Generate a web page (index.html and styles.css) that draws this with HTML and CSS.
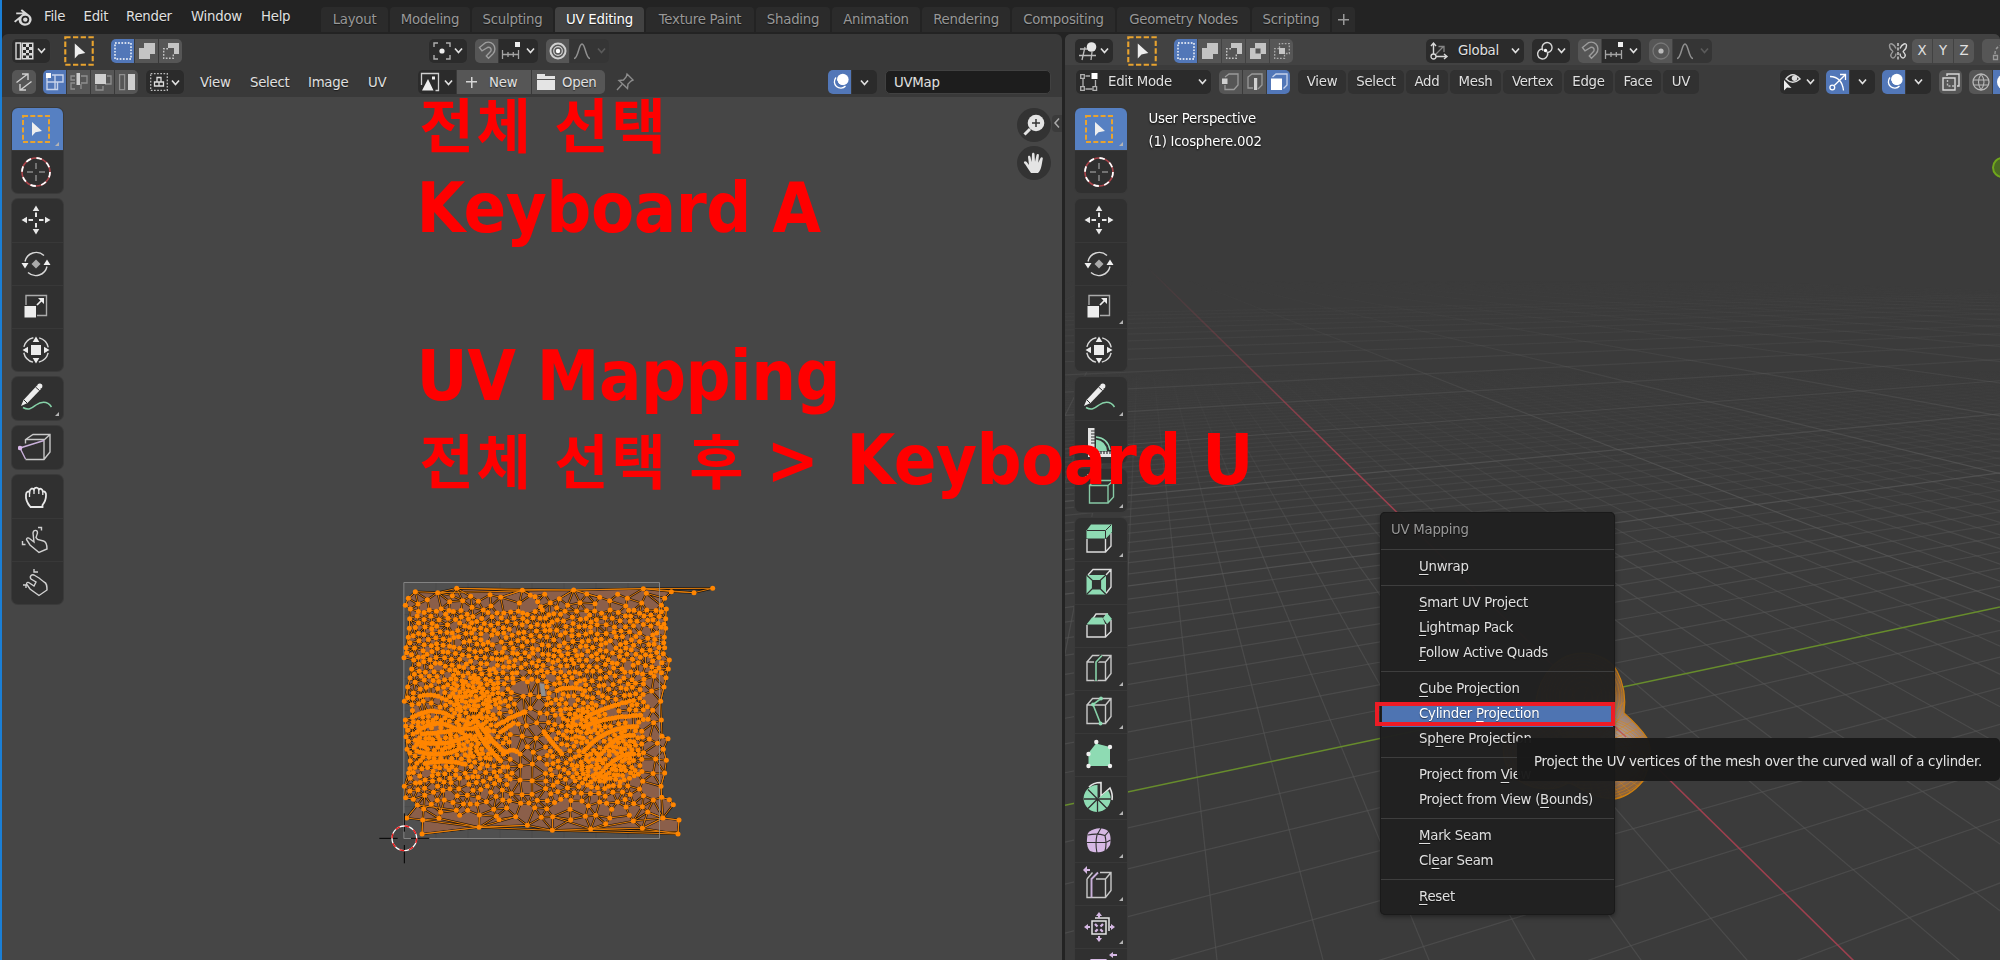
FILE: index.html
```html
<!DOCTYPE html>
<html lang="en">
<head>
<meta charset="utf-8">
<title>Blender</title>
<link rel="stylesheet" href="styles.css">
</head>
<body>
<svg class="defs" aria-hidden="true">
  <!-- header icons, 20x20 -->
  <symbol id="chev" viewBox="0 0 10 10"><path d="M1.8 3.2 5 6.8 8.2 3.2" fill="none" stroke="currentColor" stroke-width="1.5"/></symbol>
  <symbol id="logo" viewBox="0 0 22 20"><path d="M2 14.2 10.5 7.2H4.2V5.4h6.6L8.6 3.6 10 2.2l8 6.2a6.6 6.2 0 1 1-11.6 4.4L3.4 15.6z" fill="#d8d8d8"/><circle cx="13.3" cy="12.6" r="3.9" fill="#232323"/><circle cx="13.3" cy="12.6" r="2.2" fill="#d8d8d8"/></symbol>
  <symbol id="uved" viewBox="0 0 20 20"><path d="M1 2h4.500v16H1z" fill="none" stroke="#d8d8d8" stroke-width="1.400"/><path d="M6.500 1.500h12v17h-12z" fill="#d8d8d8"/><path d="M8 3h3v3H8zm6 0h3v3h-3zM11 6h3v3h-3zM8 9h3v3H8zm6 0h3v3h-3zM11 12h3v2.500h-3zM8 14.500h3V17H8zm6 0h3V17h-3z" fill="#2b2b2b"/></symbol>
  <symbol id="arrow" viewBox="-18 -18 36 36"><rect x="-13" y="-13" width="26" height="26" fill="none" stroke="#e8a32f" stroke-width="2" stroke-dasharray="5 2.300"/><path d="M-4-7V7L-.5 3.200 6 2z" fill="#eee"/></symbol>
  <symbol id="selnew" viewBox="0 0 20 20"><rect x="2" y="2" width="16" height="16" fill="none" stroke="#fff" stroke-width="1.400" stroke-dasharray="1.700 1.500"/></symbol>
  <symbol id="selext" viewBox="0 0 20 20"><path d="M7 2h11v11h-5v5H2V7h5z" fill="#c4c4c4"/></symbol>
  <symbol id="selsub" viewBox="0 0 20 20"><path d="M7 2h11v11h-5V7H7z" fill="#c4c4c4"/><path d="M7 7.700H2.700V17.300H12.300V13" fill="none" stroke="#c4c4c4" stroke-width="1.400" stroke-dasharray="1.700 1.500"/></symbol>
  <symbol id="seldif" viewBox="0 0 20 20"><path d="M7 2h11v11h-5v5H2V7h5zM7.500 7.500v5h5v-5z" fill="#c4c4c4" fill-rule="evenodd"/></symbol>
  <symbol id="selint" viewBox="0 0 20 20"><path d="M7 7h6v6H7z" fill="#c4c4c4"/><path d="M7.500 7V2.700H17.300V12.500H13M7 7.700H2.700V17.300H12.500V13" fill="none" stroke="#aaa" stroke-width="1.300" stroke-dasharray="1.700 1.500"/></symbol>
  <symbol id="pivot" viewBox="0 0 20 20"><path d="M2 6V2h4M14 2h4v4M18 14v4h-4M6 18H2v-4" fill="none" stroke="#b0b0b0" stroke-width="1.400"/><circle cx="10" cy="10" r="2.600" fill="#eee"/></symbol>
  <symbol id="magnet" viewBox="0 0 20 20"><path d="M2.500 6.500 6.500 3.200a5.800 6 0 0 1 9.500 9.600l-4.500 4.400-2.200-2.300 4-4.100a2.600 2.600 0 0 0-3.600-3.800L5 9.800z" fill="none" stroke="#9c9c9c" stroke-width="1.400"/></symbol>
  <symbol id="snap" viewBox="0 0 20 20"><path d="M1.500 9v9M7 11v5M12.300 11v5M17.500 9v9M1.500 13.500h16" fill="none" stroke="#a4a4a4" stroke-width="1.300"/><path d="M14 1h5v5h-5z" fill="#eee"/></symbol>
  <symbol id="prop" viewBox="0 0 20 20"><circle cx="10" cy="10" r="7.500" fill="none" stroke="#cfcfcf" stroke-width="2"/><circle cx="10" cy="10" r="4.300" fill="none" stroke="#cfcfcf" stroke-width="1.200"/><circle cx="10" cy="10" r="2.200" fill="#fff"/></symbol>
  <symbol id="propoff" viewBox="0 0 20 20"><circle cx="10" cy="10" r="8" fill="none" stroke="#777" stroke-width="1.300"/><circle cx="10" cy="10" r="2.600" fill="#bbb"/></symbol>
  <symbol id="curve" viewBox="0 0 20 20"><path d="M2 17.500C6.500 17.500 6.500 3 10 3s3.500 14.500 8 14.500" fill="none" stroke="#909090" stroke-width="1.500"/></symbol>
  <symbol id="sync" viewBox="0 0 20 20"><path d="M2.500 10.500 13 2.500M8 2h6v6M17.500 9.500 7 17.500M12 18H6v-6" fill="none" stroke="#d0d0d0" stroke-width="1.400"/></symbol>
  <symbol id="uvv" viewBox="0 0 20 20"><path d="M2 4v13.500h10.500V10H18V3H7M2 10h10.500M10 3v14.500" fill="none" stroke="#c6d2ea" stroke-width="1.400"/><path d="M1 1h5v5H1z" fill="#fff"/></symbol>
  <symbol id="uve" viewBox="0 0 20 20"><path d="M6 4H2v4h4M6 11H2v6h4M12 4h6v7h-6M12 17V12" fill="none" stroke="#8f8f8f" stroke-width="1.300"/><path d="M7.500 1h3.500v12H7.500z" fill="#cfcfcf"/></symbol>
  <symbol id="uvf" viewBox="0 0 20 20"><path d="M14 4h4v8h-6M3 13v5h7v-4" fill="none" stroke="#8f8f8f" stroke-width="1.300"/><path d="M2 2h11v10H2z" fill="#cfcfcf"/></symbol>
  <symbol id="uvi" viewBox="0 0 20 20"><path d="M2.600 2.600h5v15h-5z" fill="none" stroke="#8f8f8f" stroke-width="1.300"/><path d="M11 2h7v16h-7z" fill="#cfcfcf"/></symbol>
  <symbol id="sticky" viewBox="0 0 20 20"><rect x="1.700" y="1.700" width="16.600" height="16.600" fill="none" stroke="#bbb" stroke-width="1.300" stroke-dasharray="1.700 1.500"/><path d="M8 5.500h4V10H8zM5.500 10H10v4H5.500zM10 10h4.500v4H10z" fill="none" stroke="#ddd" stroke-width="1.300"/></symbol>
  <symbol id="img" viewBox="0 0 20 20"><path d="M1.500 13V1.500h17v17h-3" fill="none" stroke="#cfcfcf" stroke-width="1.300"/><path d="M2 18.500 8 7l5.500 11.500zM12 4.500h3v3h-3z" fill="#eee"/></symbol>
  <symbol id="folder" viewBox="0 0 20 20"><path d="M1 2h8v2h10v3H1zM1 8h18v10H1z" fill="#e4e4e4"/></symbol>
  <symbol id="pin" viewBox="0 0 20 20"><path d="M12 2 18 8l-2 1-3 3-.5 4.500L4 8.500 8.500 8 11.300 4.700zM7 12.500 2 18" fill="none" stroke="#8c8c8c" stroke-width="1.400"/></symbol>
  <symbol id="over" viewBox="0 0 20 20"><circle cx="12.800" cy="7.500" r="5.800" fill="#fff"/><path d="M6 5.500a6.300 6.300 0 1 0 9.500 8.500" fill="none" stroke="#fff" stroke-width="1.300"/><path d="M7 9a6 6 0 0 0 6 5" fill="none" stroke="#5277b8" stroke-width="1.300"/></symbol>
  <symbol id="ved" viewBox="0 0 20 20"><path d="M2 8h8M1 14.500h17M7 6 4 19M14 11l-1 8" fill="none" stroke="#bbb" stroke-width="1.300"/><circle cx="13.500" cy="6" r="4.800" fill="#e6e6e6"/></symbol>
  <symbol id="edit" viewBox="0 0 20 20"><path d="M4 6.500v8M6.500 17h7M16.500 8v6M6.500 4H11" fill="none" stroke="#b0b0b0" stroke-width="1.300"/><path d="M1.700 2.700h3.600v3.600H1.700zM1.700 14.700h3.600v3.600H1.700zM14 14.700h3.600v3.600H14z" fill="none" stroke="#b0b0b0" stroke-width="1.300"/><path d="M12.500 1h6v6h-6z" fill="#fff"/></symbol>
  <symbol id="mv" viewBox="0 0 20 20"><path d="M4 5 8 2h9v11l-4 4.500H4V13" fill="none" stroke="#9a9a9a" stroke-width="1.300"/><path d="M1 6.500h5.500V12H1z" fill="#d0d0d0"/></symbol>
  <symbol id="me" viewBox="0 0 20 20"><path d="M8 16H3V5l4-3h10v11l-4 4" fill="none" stroke="#9a9a9a" stroke-width="1.300"/><path d="M9 6h3.200v12H9z" fill="#d0d0d0"/></symbol>
  <symbol id="mf" viewBox="0 0 20 20"><path d="M3.500 5 7 2h11v11l-3.500 3.500" fill="none" stroke="#c6d2ea" stroke-width="1.300"/><path d="M2 6.500h11V18H2z" fill="#fff"/></symbol>
  <symbol id="orient" viewBox="0 0 20 20"><path d="M4.500 2.500v13h13M2 5l2.500-3L7 5M15 13l3 2.500-3 2.500" fill="none" stroke="#d8d8d8" stroke-width="1.400"/><path d="M5 15 14 6M9.500 5.500H15V11" fill="none" stroke="#858585" stroke-width="1.300"/><circle cx="4.500" cy="15.500" r="2.500" fill="#2b2b2b" stroke="#d8d8d8" stroke-width="1.300"/></symbol>
  <symbol id="link" viewBox="0 0 20 20"><path d="M8 9.500a5 5 0 1 1 5 2M12 10.500a5 5 0 1 1-5-2.500" fill="none" stroke="#d8d8d8" stroke-width="1.400"/><circle cx="10.500" cy="9.500" r="1.700" fill="#fff"/></symbol>
  <symbol id="bfly" viewBox="0 0 20 20"><path d="M8 7.500C6 2.500 1.500 1.500 1.500 4.500S3 9 4.500 10s-3 2.500-1.500 5.500 5 1 5-3" fill="none" stroke="#9a9a9a" stroke-width="1.400"/><path d="M12 7.500c2-5 6.500-6 6.500-3S17 9 15.500 10s3 2.500 1.500 5.500-5 1-5-3" fill="none" stroke="#d8d8d8" stroke-width="1.400"/><path d="M10 2v17" stroke="#ddd" stroke-width="1.300" stroke-dasharray="3 1.500"/></symbol>
  <symbol id="eye" viewBox="0 0 20 20"><path d="M3 7q6.500-8.500 14 0-7.500 6.500-14 0z" fill="none" stroke="#ddd" stroke-width="1.500"/><circle cx="11.500" cy="6.200" r="2.700" fill="#ddd"/><path d="M1 8v10.500l3-3 4.500.5z" fill="#eee"/></symbol>
  <symbol id="giz" viewBox="0 0 20 20"><path d="M2 4.500Q14 5 15.500 18.500M6.300 13.500 17 3M12 2.500h5.500V8" fill="none" stroke="#fff" stroke-width="1.300"/><circle cx="4.300" cy="15.500" r="2.400" fill="none" stroke="#fff" stroke-width="1.300"/></symbol>
  <symbol id="xray" viewBox="0 0 20 20"><path d="M2 6h12v12H2zM6 4V2h12v12h-2" fill="none" stroke="#d8d8d8" stroke-width="1.400"/><path d="M6.500 8v6H13" fill="none" stroke="#bbb" stroke-width="1.400" stroke-dasharray="2 1.500"/></symbol>
  <symbol id="wire" viewBox="0 0 20 20"><circle cx="10" cy="10" r="8" fill="none" stroke="#b8b8b8" stroke-width="1.300"/><path d="M10 2q-5 8 0 16M10 2q6 8 0 16M2 8h16M3 13h14" fill="none" stroke="#b8b8b8" stroke-width="1.100"/></symbol>
  <symbol id="auto" viewBox="0 0 20 20"><path d="M3 13C3 7 7 4 12 4M8 17C13 17 16 14 17 9" fill="none" stroke="#999" stroke-width="1.400" stroke-dasharray="3 2"/><path d="M1.500 14.500h4v4h-4zM14 2h4v4h-4z" fill="none" stroke="#999" stroke-width="1.300"/></symbol>

  <!-- tool icons, 36x36 around the origin -->
  <symbol id="t-cursor" viewBox="-18 -18 36 36"><circle r="14" fill="none" stroke="#a9444a" stroke-width="1.600"/><circle r="14" fill="none" stroke="#fff" stroke-width="1.800" stroke-dasharray="5.500 5.500"/><path d="M-9 0h6M3 0h6M0-9v6M0 3v6" stroke="#888" stroke-width="1.500"/></symbol>
  <symbol id="t-move" viewBox="-18 -18 36 36"><path d="M0-14.500 3.300-9h-6.600zM0 14.500 3.300 9h-6.600zM-14.500 0-9-3.300v6.600zM14.500 0 9-3.300v6.600z" fill="#e8e8e8"/><path d="M-7.500 0h4.500M3 0h4.500M0-7.500v4.500M0 3v4.500" stroke="#e8e8e8" stroke-width="2" /></symbol>
  <symbol id="t-rot" viewBox="-18 -18 36 36"><path d="M-11-2.500A11.500 11.500 0 0 1 8-8.500M11 2.500A11.500 11.500 0 0 1-8 8.500" fill="none" stroke="#d8d8d8" stroke-width="1.400"/><path d="M-14.500-1h7L-11 4.500zM14.500 1h-7L11-4.500z" fill="#f0f0f0"/><path d="M0-4.500 4.500 0 0 4.500-4.500 0z" fill="#aaa"/></symbol>
  <symbol id="t-scale" viewBox="-18 -18 36 36"><path d="M-10-2v-9.500h20.500V8.500H1" fill="none" stroke="#aaa" stroke-width="1.400"/><path d="M-11.500-1H0v11.500h-11.500zM8-9v6L2-9z" fill="#ededed"/><path d="M1-2 6-7" stroke="#ededed" stroke-width="1.700"/></symbol>
  <symbol id="t-tra" viewBox="-18 -18 36 36"><circle r="12.500" fill="none" stroke="#d8d8d8" stroke-width="1.400" stroke-dasharray="13.600 6" stroke-dashoffset="-3"/><path d="M-5-5H5V5H-5zM0-13.500 3.300-8h-6.600zM0 13.500 3.300 8h-6.600zM-13.500 0-8-3.300v6.600zM13.500 0 8-3.300v6.600z" fill="#ededed"/></symbol>
  <symbol id="t-pen" viewBox="-18 -18 36 36"><path d="M-15 8l2.500-6L1-12.500 5-9-8.500 5z" fill="#ededed"/><circle cx="3.800" cy="-12" r="2.600" fill="#ededed"/><path d="M-.5-11 3.500-7.500M-12 2l3 3" stroke="#303030" stroke-width="1"/><path d="M-13 9.500C-7 13-4 10 0 7S11 2 15.500 9" fill="none" stroke="#86d2a8" stroke-width="1.500"/></symbol>
  <symbol id="t-rip" viewBox="-18 -18 36 36"><path d="M-10.500-4.500v-4L-3-13.500H14L14 4 8 11.500H-10.500M8 11.500V-8L14-13.500M-10.500-8.500H8" fill="none" stroke="#c8c8c8" stroke-width="1.400"/><path d="M8-7.500-16 0l5.500 11" fill="none" stroke="#c9b0da" stroke-width="1.400"/><circle cx="-16" cy="0" r="2.300" fill="#d8b8e8"/></symbol>
  <symbol id="t-grab" viewBox="-18 -18 36 36"><path d="M-5.500 10C-9 6-10.500 2-10 -2.500c.2-3 2.500-3.500 3.500-2.500C-6-9-3-9-2-7.500-1-10 2-10 2.800-7.500 4.500-9 6.500-8 6.800-5.500 9-6 10.300-4 10-1.500 10 3 9 5 6.500 8v2z" fill="none" stroke="#e8e8e8" stroke-width="1.800"/><path d="M-6.500-4.500V0M-2-7v4M2.800-7v4M6.800-5v3" stroke="#e8e8e8" stroke-width="1.300"/></symbol>
  <symbol id="t-relax" viewBox="-18 -18 36 36"><path d="M3 12.500-6 5-9.500-.5c0-2 2-2 3-1L-2 2-3-7c.5-3.500 4.500-3.500 4.500 0L0-2.500l1.500 2 6 1.500c3 1 3.500 4 3.500 8zM2-12.500h3.500v3M-13.500 1v3.500h3" fill="none" stroke="#d0d0d0" stroke-width="1.400"/></symbol>
  <symbol id="t-pinch" viewBox="-18 -18 36 36"><path d="M3 12.500-6 6-9.500 1c0-2 2-2 3-1L-2 3l2-4-5-3c-2-3 1-5 3-4l5 3 5 4c3 1 3 4 3 8zM-2-14v3h4M-13 2h3v3" fill="none" stroke="#d0d0d0" stroke-width="1.400"/></symbol>
  <symbol id="t-meas" viewBox="-18 -18 36 36"><path d="M-11-14h6.500V9.500H14V15h-25z" fill="#e4e4e4"/><path d="M-8-11h4M-8-8h4M-8-5h4M-8-2h4M-8 1h4M-1 12V9M2 12V9M5 12V9M8 12V9M11 12V9" stroke="#303030" stroke-width="1.200"/><path d="M-3-2.500Q7-1 8 9H-3z" fill="#8edbb3"/><path d="M-3-5Q9-4 11 8" fill="none" stroke="#8edbb3" stroke-width="1.300"/></symbol>
  <symbol id="t-add" viewBox="-18 -18 36 36"><path d="M-9.500-5.500H9V12H-9.500zM-9.500-5.500-5-10.500H14.500V6L9 12M9-5.500l5.500-5" fill="none" stroke="#86c9a5" stroke-width="1.400"/><path d="M-11-17v6M-14-14h6" stroke="#86c9a5" stroke-width="1.500"/></symbol>
  <symbol id="t-ext" viewBox="-18 -18 36 36"><path d="M-12-1V12H6.500V-1M6.500 12 12 6V-7" fill="none" stroke="#dcdcdc" stroke-width="1.400"/><path d="M-12.500-9.500-8-15.500H13V-8L7-1.500h-19.500z" fill="#8edbb3"/><path d="M-12-9.500H6.500L12-15M6.500-9v7.500" fill="none" stroke="#303030" stroke-width="1"/></symbol>
  <symbol id="t-inset" viewBox="-18 -18 36 36"><path d="M-11-8-6-13.500H12V4L7 10.500M7-8l5-5.500" fill="none" stroke="#dcdcdc" stroke-width="1.400"/><path d="M-12.500-8H7V11.500h-19.500z" fill="#8edbb3"/><path d="M-6.500-2.500H1.500V6h-8zM-12.500-8l6 5.500M7-8-.5-1M-12.500 11.500l6-6M7 11.500 1 5.500" fill="#303030" stroke="#303030" stroke-width="1.200"/></symbol>
  <symbol id="t-bev" viewBox="-18 -18 36 36"><path d="M-12-1V11H6.500V-2M6.500 11 12 5.500V-6M-6-7.500-3-12H8L5-7" fill="none" stroke="#dcdcdc" stroke-width="1.400"/><path d="M-12.500-1.500-7-8.500H3.500L6.500-1.500zM4-8 8-13 13-7 8-2z" fill="#8edbb3"/></symbol>
  <symbol id="t-loop" viewBox="-18 -18 36 36"><path d="M-12-7V11.500H6.500V-7zM-12-7l5.500-6.500H12V4.500L6.500 11.500M6.500-7l5.500-6.500" fill="none" stroke="#c8c8c8" stroke-width="1.400"/><path d="M-3 11.500V-7L3-13.500" fill="none" stroke="#303030" stroke-width="4"/><path d="M-3 12V-7L3-13.500" fill="none" stroke="#86d2a8" stroke-width="1.600"/></symbol>
  <symbol id="t-knife" viewBox="-18 -18 36 36"><path d="M-12-7V11.500H6.500V-7zM-12-7l5.500-6.500H12V4.500L6.500 11.500M6.500-7l5.500-6.500" fill="none" stroke="#c8c8c8" stroke-width="1.400"/><path d="M2-13.500-6-7.500 1.500 11.500" fill="none" stroke="#86d2a8" stroke-width="1.600"/><circle cx="2" cy="-13.500" r="1.900" fill="#8edbb3"/><circle cx="-6" cy="-7.500" r="1.900" fill="#8edbb3"/><circle cx="1.500" cy="11.500" r="1.900" fill="#8edbb3"/></symbol>
  <symbol id="t-poly" viewBox="-18 -18 36 36"><path d="M-10.500 11V-2L-3-11.500 11-8V11z" fill="#8edbb3"/><g fill="#f0f0f0"><circle cx="-10.500" cy="11" r="2.200"/><circle cx="-10.500" cy="-1" r="2.200"/><circle cx="-2.700" cy="-13" r="2.200"/><circle cx="11" cy="-8" r="2.200"/><circle cx="11" cy="11" r="2.200"/></g></symbol>
  <symbol id="t-spin" viewBox="-18 -18 36 36"><path d="M-10-11Q-6-15.500 2-15.500V-2L11-10Q14-4 13 2" fill="none" stroke="#e4e4e4" stroke-width="1.600"/><path d="M-1.500 1V-13A13.500 13.500 0 1 0 9-7.500z" fill="#8edbb3"/><path d="M-1.500 1-11-8.500M-1.500 1H-15M-1.500 1-11 10.500M-1.500 1V14M-1.500 1 8 10.500M-1.500 1H12" stroke="#303030" stroke-width="1.300"/></symbol>
  <symbol id="t-smooth" viewBox="-18 -18 36 36"><path d="M-11-8C-5-14 4-14 9-10c3 3 3 9 2 14C7 12-3 12.500-9 10-13 6-12.500-2-11-8z" fill="#d6b8e4"/><path d="M-12 1.500H7L11.500-1M-2 12Q-4 2-2-6L2-13M-11-6Q-2-8 6-5.500L10-10M6-5.500Q8 3 6 10" fill="none" stroke="#303030" stroke-width="1.100"/></symbol>
  <symbol id="t-slide" viewBox="-18 -18 36 36"><path d="M-12-5V13.500H6.500V-5H-3M-12-5l5.500-6.500M1-11.500H12V6.500L6.500 13.500M6.500-5l5.500-6.500" fill="none" stroke="#c8c8c8" stroke-width="1.400"/><path d="M-7.500 13.500V-5L-1-11.500" fill="none" stroke="#c9b0da" stroke-width="1.900"/><path d="M-16-14l4-4v3h3v2h-3v3z" fill="#d6b8e4"/></symbol>
  <symbol id="t-shrink" viewBox="-18 -18 36 36"><path d="M-7-6H7V7H-7zM-4-9H10V4" fill="none" stroke="#e4e4e4" stroke-width="1.500"/><path d="M-4-3l8 8M4-3l-8 8" stroke="#d6b8e4" stroke-width="2.300" stroke-dasharray="3.500 4"/><path d="M0-15 3-11h-6zM0 15 3 11h-6zM-15 0-11-3v6zM16 0 12-3v6z" fill="#d6b8e4"/><path d="M0-11v2M0 9v2M-11 0h2M11 0h2" stroke="#d6b8e4" stroke-width="2"/></symbol>
  <symbol id="t-shear" viewBox="-18 -18 36 36"><path d="M-14-6l6-5H8L4-6z" fill="#d6b8e4"/><path d="M10-15l4-3v2h4v2h-4v2z" fill="#d6b8e4"/></symbol>
</svg>

<div class="app">
  <header class="topbar">
    <svg class="logo"><use href="#logo"/></svg>
    <nav class="menus"><span class="m-file">File</span><span class="m-edit">Edit</span><span class="m-render">Render</span><span class="m-window">Window</span><span class="m-help">Help</span></nav>
    <nav class="tabs">
      <span class="tab w67">Layout</span><span class="tab w80">Modeling</span><span class="tab w81">Sculpting</span><span class="tab w89 active">UV Editing</span><span class="tab w108">Texture Paint</span><span class="tab w74">Shading</span><span class="tab w88">Animation</span><span class="tab w88">Rendering</span><span class="tab w103">Compositing</span><span class="tab w133">Geometry Nodes</span><span class="tab w78">Scripting</span><span class="tab w23 plus"><i></i></span>
    </nav>
  </header>

  <main class="areas">
    <section class="area uv">
      <div class="hrow r1">
        <div class="btn dark w38"><svg><use href="#uved"/></svg><svg class="c"><use href="#chev"/></svg></div>
        <svg class="tool"><use href="#arrow"/></svg>
        <div class="grp ml18"><b class="on"><svg><use href="#selnew"/></svg></b><b><svg><use href="#selext"/></svg></b><b><svg><use href="#selsub"/></svg></b></div>
        <div class="btn dark w38 ml-piv"><svg><use href="#pivot"/></svg><svg class="c"><use href="#chev"/></svg></div>
        <div class="grp ml8"><b><svg><use href="#magnet"/></svg></b><b class="dk w40"><svg><use href="#snap"/></svg><svg class="c"><use href="#chev"/></svg></b></div>
        <div class="grp ml8"><b><svg><use href="#prop"/></svg></b><b class="dim w40"><svg><use href="#curve"/></svg><svg class="c"><use href="#chev"/></svg></b></div>
      </div>
      <div class="hrow r2">
        <div class="grp"><b class="w24"><svg><use href="#sync"/></svg></b></div>
        <div class="grp ml7"><b class="on"><svg><use href="#uvv"/></svg></b><b><svg><use href="#uve"/></svg></b><b><svg><use href="#uvf"/></svg></b><b><svg><use href="#uvi"/></svg></b></div>
        <div class="btn dark w38 ml8"><svg><use href="#sticky"/></svg><svg class="c"><use href="#chev"/></svg></div>
        <div class="hmenus"><span class="h50">View</span><span class="h58">Select</span><span class="h60">Image</span><span class="h49">UV</span></div>
        <div class="grp"><b class="dk w39"><svg><use href="#img"/></svg><svg class="c"><use href="#chev"/></svg></b><b class="w74 lab"><i class="plusi"></i>New</b><b class="w73 lab"><svg><use href="#folder"/></svg>Open</b></div>
        <svg class="pin"><use href="#pin"/></svg>
        <div class="grp ml-ov"><b class="on w23"><svg><use href="#over"/></svg></b><b class="dk w25"><svg class="c"><use href="#chev"/></svg></b></div>
        <div class="field">UVMap</div>
      </div>
      <div class="editor">
        <canvas id="uvmesh" width="1060" height="863"></canvas>
        <div class="toolbar">
          <div class="tg"><div class="tc on more"><svg><use href="#arrow"/></svg></div><div class="tc"><svg><use href="#t-cursor"/></svg></div></div>
          <div class="tg"><div class="tc"><svg><use href="#t-move"/></svg></div><div class="tc"><svg><use href="#t-rot"/></svg></div><div class="tc"><svg><use href="#t-scale"/></svg></div><div class="tc"><svg><use href="#t-tra"/></svg></div></div>
          <div class="tg"><div class="tc more"><svg><use href="#t-pen"/></svg></div></div>
          <div class="tg"><div class="tc"><svg><use href="#t-rip"/></svg></div></div>
          <div class="tg"><div class="tc"><svg><use href="#t-grab"/></svg></div><div class="tc"><svg><use href="#t-relax"/></svg></div><div class="tc"><svg><use href="#t-pinch"/></svg></div></div>
        </div>
        <div class="nav">
          <div class="rb"><svg viewBox="-17 -17 34 34"><circle cx="2" cy="-2" r="8.300" fill="#e4e4e4"/><path d="M-4 4-9.500 9.500" stroke="#e4e4e4" stroke-width="3"/><path d="M2-6v8M-2-2h8" stroke="#333" stroke-width="1.500"/></svg></div>
          <div class="rb"><svg viewBox="-17 -17 34 34"><path d="M-3 10C-6 6-8 2-10 0c-.5-1.500 1-2.500 2.500-1.200L-5 2-6-6c0-1.700 2.200-1.700 2.500 0L-2.400-1-2-9c.2-1.600 2.300-1.600 2.500 0L1-1.200 2.500-8c.4-1.600 2.500-1.300 2.400.4L4.200-.3 6.500-5c.8-1.400 2.600-.6 2.300.8C7.500 2 7.500 7 4 10z" fill="#e4e4e4"/></svg></div>
        </div>
        <div class="side"><svg viewBox="0 0 9 16"><path d="M7 3.500 3 8l4 4.500" fill="none" stroke="#aaa" stroke-width="1.500"/></svg></div>
      </div>
    </section>

    <section class="area v3d">
      <canvas id="view" width="935" height="926"></canvas>
      <div class="hrow r1">
        <div class="btn dark w38"><svg><use href="#ved"/></svg><svg class="c"><use href="#chev"/></svg></div>
        <svg class="tool"><use href="#arrow"/></svg>
        <div class="grp ml18"><b class="on"><svg><use href="#selnew"/></svg></b><b><svg><use href="#selext"/></svg></b><b><svg><use href="#selsub"/></svg></b><b><svg><use href="#seldif"/></svg></b><b><svg><use href="#selint"/></svg></b></div>
        <div class="btn dark w98 ml-glob"><svg><use href="#orient"/></svg><em>Global</em><svg class="c"><use href="#chev"/></svg></div>
        <div class="btn dark w38 ml8"><svg><use href="#link"/></svg><svg class="c"><use href="#chev"/></svg></div>
        <div class="grp ml8"><b><svg><use href="#magnet"/></svg></b><b class="dk w40"><svg><use href="#snap"/></svg><svg class="c"><use href="#chev"/></svg></b></div>
        <div class="grp ml8"><b><svg><use href="#propoff"/></svg></b><b class="dim w40"><svg><use href="#curve"/></svg><svg class="c"><use href="#chev"/></svg></b></div>
        <svg class="bfly"><use href="#bfly"/></svg>
        <div class="grp xyz"><b>X</b><b>Y</b><b>Z</b></div>
        <div class="grp ml8"><b class="w40"><svg><use href="#auto"/></svg></b></div>
      </div>
      <div class="hrow r2">
        <div class="btn dark w135"><svg><use href="#edit"/></svg><em>Edit Mode</em><svg class="c"><use href="#chev"/></svg></div>
        <div class="grp ml8"><b><svg><use href="#mv"/></svg></b><b><svg><use href="#me"/></svg></b><b class="on"><svg><use href="#mf"/></svg></b></div>
        <div class="mbtns"><span class="w48">View</span><span class="w56">Select</span><span class="w42">Add</span><span class="w51">Mesh</span><span class="w59">Vertex</span><span class="w49">Edge</span><span class="w46">Face</span><span class="w36">UV</span></div>
        <div class="btn dark w39 ml-eye"><svg><use href="#eye"/></svg><svg class="c"><use href="#chev"/></svg></div>
        <div class="grp ml7"><b class="on"><svg><use href="#giz"/></svg></b><b class="dk w25"><svg class="c"><use href="#chev"/></svg></b></div>
        <div class="grp ml7"><b class="on"><svg><use href="#over"/></svg></b><b class="dk w25"><svg class="c"><use href="#chev"/></svg></b></div>
        <div class="grp ml8"><b><svg><use href="#xray"/></svg></b></div>
        <div class="grp ml7"><b><svg><use href="#wire"/></svg></b><b class="on"><svg viewBox="0 0 20 20"><circle cx="10" cy="10" r="8" fill="#fff"/></svg></b></div>
      </div>
      <div class="vbody">
        <div class="toolbar">
          <div class="tg"><div class="tc on more"><svg><use href="#arrow"/></svg></div><div class="tc"><svg><use href="#t-cursor"/></svg></div></div>
          <div class="tg"><div class="tc"><svg><use href="#t-move"/></svg></div><div class="tc"><svg><use href="#t-rot"/></svg></div><div class="tc more"><svg><use href="#t-scale"/></svg></div><div class="tc"><svg><use href="#t-tra"/></svg></div></div>
          <div class="tg"><div class="tc more"><svg><use href="#t-pen"/></svg></div><div class="tc"><svg><use href="#t-meas"/></svg></div></div>
          <div class="tg"><div class="tc more"><svg><use href="#t-add"/></svg></div></div>
          <div class="tg"><div class="tc more"><svg><use href="#t-ext"/></svg></div><div class="tc"><svg><use href="#t-inset"/></svg></div><div class="tc"><svg><use href="#t-bev"/></svg></div><div class="tc more"><svg><use href="#t-loop"/></svg></div><div class="tc more"><svg><use href="#t-knife"/></svg></div><div class="tc"><svg><use href="#t-poly"/></svg></div><div class="tc more"><svg><use href="#t-spin"/></svg></div><div class="tc more"><svg><use href="#t-smooth"/></svg></div><div class="tc more"><svg><use href="#t-slide"/></svg></div><div class="tc more"><svg><use href="#t-shrink"/></svg></div><div class="tc"><svg><use href="#t-shear"/></svg></div></div>
        </div>
        <div class="vinfo"><div>User Perspective</div><div>(1) Icosphere.002</div></div>
      </div>
      <div class="ygizmo"></div>
    </section>
  </main>
</div>

<div class="note">
  <p><span class="ko">전체 선택</span></p>
  <p>Keyboard A</p>
  <p></p>
  <p>UV Mapping</p>
  <p><span class="ko">전체 선택 후</span><span class="gt">&gt;</span><span class="kb">Keyboard U</span></p>
</div>

<div class="popup">
  <div class="ptitle">UV Mapping</div>
  <hr><div class="pi"><u>U</u>nwrap</div>
  <hr><div class="pi"><u>S</u>mart UV Project</div><div class="pi"><u>L</u>ightmap Pack</div><div class="pi"><u>F</u>ollow Active Quads</div>
  <hr><div class="pi"><u>C</u>ube Projection</div><div class="pi hot">Cylinder <u>P</u>rojection</div><div class="pi">Sp<u>h</u>ere Projection</div>
  <hr><div class="pi">Project from <u>V</u>iew</div><div class="pi">Project from View (<u>B</u>ounds)</div>
  <hr><div class="pi"><u>M</u>ark Seam</div><div class="pi">Cl<u>e</u>ar Seam</div>
  <hr><div class="pi"><u>R</u>eset</div>
</div>
<div class="redbox"></div>
<div class="tip">Project the UV vertices of the mesh over the curved wall of a cylinder.</div>
<script src="script.js"></script>
</body>
</html>
```

FILE: styles.css
```css
* { box-sizing: border-box; }
body { margin: 0; width: 2000px; height: 960px; overflow: hidden; background: #232323; position: relative;
  font-family: "DejaVu Sans", "Noto Sans CJK KR", sans-serif; font-size: 13.3px; letter-spacing: -.250px; color: #e0e0e0; }
.defs { position: absolute; width: 0; height: 0; }
.app { height: 960px; border-left: 2px solid #1a7fd6; display: flex; flex-direction: column; overflow: hidden; }
.topbar { height: 34px; flex: none; display: flex; text-shadow: 0 1px 1px #0008; }
.logo { width: 22px; height: 20px; margin: 7px 0 0 10px; }
.menus { display: flex; width: 287px; line-height: 33px; padding-left: 10px; }
.m-file { width: 39.500px; } .m-edit { width: 42.500px; } .m-render { width: 65px; } .m-window { width: 70px; }
.tabs { display: flex; gap: 2px; padding-top: 7px; height: 32px; }
.tab { background: #2b2b2b; border-radius: 4px 4px 0 0; color: #989898; text-align: center; line-height: 25px; white-space: nowrap; }
.tab.active { background: #424242; color: #fff; }
.w67 { width: 67px; } .w80 { width: 80px; } .w81 { width: 81px; } .w89 { width: 89px; } .w108 { width: 108px; }
.w74 { width: 74px; } .w88 { width: 88px; } .w103 { width: 103px; } .w133 { width: 133px; } .w78 { width: 78px; } .w23 { width: 23px; }
.plus { display: flex; align-items: center; justify-content: center; }
.plus i, .plusi { width: 11px; height: 11px; background: linear-gradient(#999, #999) center/11px 1.500px no-repeat, linear-gradient(#999, #999) center/1.500px 11px no-repeat; }

.areas { display: flex; gap: 3px; flex: 1; }
.area { border-radius: 6px 6px 0 0; overflow: hidden; position: relative; }
.uv { width: 1060px; background: #393939; flex: none; }
.v3d { width: 935px; background: #3b3b3b; flex: none; }
.v3d canvas { position: absolute; left: 0; top: 0; }
.hrow { display: flex; align-items: center; position: relative; padding-left: 10px; }
.uv .r1, .v3d .r1 { height: 31px; padding-top: 2px; }
.uv .r2 { height: 32px; padding-top: 2px; }
.v3d .r1 { background: #424242; }
.v3d .r2 { height: 32px; padding: 1px 0 0 11px; }
.hrow svg { width: 20px; height: 20px; flex: none; display: block; }
.hrow svg.c { width: 11px; height: 11px; color: #e0e0e0; }
.btn { height: 24px; border-radius: 5px; display: flex; align-items: center; justify-content: space-between; padding: 0 3px; flex: none; box-shadow: 0 0 0 1px #4442; }
.dark { background: #2b2b2b; }
.w38 { width: 38px; } .w39 { width: 39px; } .w40 { width: 40px; } .w24 { width: 24px; } .w25 { width: 25px; } .w98 { width: 98px; } .w135 { width: 135px; } .w73 { width: 73px; }
.btn em { font-style: normal; flex: 1; padding-left: 9px; text-shadow: 0 1px 1px #0008; }
.hrow svg.tool { width: 38px; height: 38px; margin: -8px 0 -8px 10px; }
.grp { display: flex; gap: 1px; border-radius: 5px; overflow: hidden; height: 24px; flex: none; }
.grp b { width: 23px; background: #565656; display: flex; align-items: center; justify-content: center; font-weight: 400; flex: none; }
.grp b.on { background: #5277b8; }
.grp b.dk, .grp b.dim { background: #2b2b2b; justify-content: space-around; }
.grp b.dim { background: #353535; }
.grp b.dim .c { color: #5a5a5a; }
.grp b.w23 { width: 23px; } .grp b.w24 { width: 24px; } .grp b.w25 { width: 25px; } .grp b.w39 { width: 38px; } .grp b.w40 { width: 39px; } .grp b.w74 { width: 74px; } .grp b.w73 { width: 73px; }
.grp b.lab { text-shadow: 0 1px 1px #0008; justify-content: flex-start; padding-left: 4px; gap: 6px; }
.grp b.lab .plusi { margin: 0 6px 0 5px; filter: brightness(1.400); }
.ml18 { margin-left: 13px; } .ml7 { margin-left: 7px; } .ml8 { margin-left: 8px; }
.ml-piv { margin-left: 247px; } .ml-ov { margin-left: 193px; } .ml-glob { margin-left: 133px; } .ml-eye { margin-left: 81px; }
.hmenus { display: flex; margin-left: 16px; text-shadow: 0 1px 1px #0008; }
.h50 { width: 50px; } .h58 { width: 58px; } .h60 { width: 60px; } .h49 { width: 50px; }
.hrow svg.pin { margin-left: 10px; }
.field { margin-left: 8px; width: 166px; height: 24px; border-radius: 5px; background: #1d1d1d; line-height: 23px; padding-left: 8px; border: 1px solid #414141; }
.bfly { margin-left: 176px; }
.xyz { margin-left: 4px; }
.xyz b { width: 20px; }
.mbtns { display: flex; gap: 2px; margin-left: 8px; }
.mbtns span { height: 24px; line-height: 23px; text-align: center; background: #313131; border-radius: 5px; text-shadow: 0 1px 1px #0008; }
.w48 { width: 48px; } .w56 { width: 56px; } .w42 { width: 42px; } .w51 { width: 51px; } .w59 { width: 59px; } .w49 { width: 49px; } .w46 { width: 46px; } .w36 { width: 36px; }

.editor { height: 863px; background: #464646; position: relative; }
.editor canvas { position: absolute; left: 0; top: 0; }
.toolbar { position: relative; display: flex; flex-direction: column; gap: 6.200px; padding: 10.500px 0 0 10px; width: 61px; }
.tg { background: #303030; border-radius: 6px; overflow: hidden; box-shadow: 0 0 0 1px #3a3a3a; flex: none; }
.tc { height: 43px; position: relative; display: flex; align-items: center; justify-content: center; padding-right: 3px; }
.tc + .tc { border-top: 1px solid #383838; }
.tc.on { background: #5680c2; height: 42px; }
.tc svg { width: 36px; height: 36px; }
.tc.more::after { content: ""; position: absolute; right: 4px; bottom: 4px; width: 0; height: 0; border: 2.500px solid transparent; border-right-color: #b4b4b4; border-bottom-color: #b4b4b4; }
.nav { position: absolute; left: 1015px; top: 11px; display: flex; flex-direction: column; gap: 4px; }
.rb { width: 34px; height: 34px; border-radius: 50%; background: #333; }
.rb svg { width: 34px; height: 34px; display: block; }
.side { position: absolute; right: 0; top: 18px; width: 10px; height: 17px; background: #3b3b3b; border-radius: 4px 0 0 4px; }
.side svg { width: 9px; height: 16px; display: block; }

.vbody { display: flex; position: relative; height: 863px; overflow: hidden; }
.v3d .toolbar { width: 61.500px; padding-top: 10.500px; }
.vinfo { color: #fff; padding: 10px 0 0 22px; line-height: 23px; text-shadow: 0 1px 2px #000; }
.ygizmo { position: absolute; left: 927px; top: 122.500px; width: 21px; height: 21px; border-radius: 50%; background: #4b6a24; border: 2px solid #70a61c; }

.note { position: absolute; left: 416.500px; top: 82px; color: #f00; font-family: "DejaVu Sans Condensed", "DejaVu Sans", sans-serif; font-stretch: condensed; font-weight: 700; font-size: 70px; letter-spacing: -.500px; }
.note p { margin: 0; height: 84px; line-height: 84px; white-space: pre; }
.ko { font-family: "Noto Sans CJK KR", sans-serif; font-size: 59px; line-height: 0; word-spacing: 4.500px; letter-spacing: 2.800px; margin-left: 3px; }
.gt { margin-left: 20px; }
.kb { margin-left: 28px; }

.popup { position: absolute; left: 1380px; top: 512px; width: 235px; height: 403px; border-radius: 5px; background: rgba(32, 32, 32, .970); box-shadow: inset 0 0 0 1px #1a1a1a, 0 2px 5px #0006; text-shadow: 0 1px 1px #0008; }
.ptitle { height: 32px; line-height: 36px; padding-left: 11px; color: #999; }
.popup hr { margin: 5px 1px; height: 1px; border: 0; background: #3e3e3e; }
.pi { height: 25px; line-height: 23px; padding-left: 39px; white-space: pre; }
.pi u { text-underline-offset: 3px; text-decoration-thickness: 1px; }
.pi.hot { background: #4e74b2; color: #fff; margin: 0 2px; padding-left: 37px; }
.redbox { position: absolute; left: 1375px; top: 702px; width: 240px; height: 24px; border: 4px solid #ee1c25; }
.tip { position: absolute; left: 1517px; top: 738px; width: 483px; height: 43px; border-radius: 5px; background: rgba(25, 25, 25, .970); line-height: 47px; padding-left: 17px; white-space: nowrap; color: #e2e2e2; }
```

FILE: script.js
```js
// Seeded generator so the mesh is the same on every load.
let seed = 20231;
function rnd() {
  seed = (seed * 1664525 + 1013904223) >>> 0;
  return seed / 4294967296;
}

function drawView() {
  const c = document.getElementById('view').getContext('2d');
  c.translate(-1065, -34);
  const O = [1583.3, 695.3], H = 262, VX = 1141.7, VY = 3627, A = 0.05222;
  function line(vx, px, py) {
    // extend from the vanishing point through (px, py)
    const dx = px - vx, dy = py - H, t = 4000 / Math.hypot(dx, dy);
    c.beginPath();
    c.moveTo(vx, H);
    c.lineTo(vx + dx * t * 2, H + dy * t * 2);
    c.stroke();
  }
  function grad(y0, y1, rgb, a) {
    const g = c.createLinearGradient(0, y0, 0, y1);
    g.addColorStop(0, `rgba(${rgb},0)`);
    g.addColorStop(1, `rgba(${rgb},${a})`);
    return g;
  }
  const minor = grad(370, 560, '84,84,84', 0.62);
  const major = grad(280, 480, '88,88,88', 0.75);
  c.lineWidth = 1.2;
  for (let pass = 0; pass < 2; pass++) {
    for (let n = -12; n < 160; n++) {
      if ((n % 10 === 0) !== (pass === 1) || n === 0) continue;
      if (!pass && n > 60) continue;
      c.strokeStyle = pass ? major : minor;
      const w = 1 + A * n;
      // point on the red axis at distance n, joined to the other vanishing point
      if (w > 0.05) {
        const px = (O[0] + A * n * VX) / w, py = (O[1] + A * n * H) / w;
        const dx = VY - px, dy = H - py;
        c.beginPath();
        c.moveTo(px - dx, py - dy);
        c.lineTo(VY, H);
        c.stroke();
      }
    }
    for (let n = -60; n < 200; n++) {
      if ((n % 10 === 0) !== (pass === 1) || n === 0) continue;
      if (!pass && Math.abs(n) > 90) continue;
      c.strokeStyle = pass ? major : minor;
      line(VX, 1853 + n * 106, 960);
    }
  }
  c.lineWidth = 1.6;
  c.strokeStyle = '#678c2c';
  c.beginPath(); c.moveTo(1065, 805.3); c.lineTo(2000, 607); c.stroke();
  c.strokeStyle = grad(268, 460, '163,64,79', 0.95);
  c.beginPath(); c.moveTo(1148, 268); c.lineTo(1853.5, 960.5); c.stroke();

  // body of the object
  const s = new Path2D('M1582 653C1600 653 1612 662 1617 671 1624 684 1626 698 1624 713 1632 720 1641 729 1647 738 1653 750 1651 764 1643 781 1634 792 1622 799 1612 799 1590 798 1578 785 1568 783 1555 792 1530 792 1512 775 1500 760 1502 742 1508 730 1518 720 1530 712 1536 700 1540 675 1558 653 1582 653z');
  c.save();
  c.clip(s);
  const g = c.createRadialGradient(1618, 742, 4, 1606, 742, 52);
  g.addColorStop(0, '#b5a096'); g.addColorStop(0.6, '#9a7c6b'); g.addColorStop(1, '#8a6440');
  c.fillStyle = g;
  c.fillRect(1490, 640, 180, 170);
  c.strokeStyle = 'rgba(220,132,10,.7)';
  c.lineWidth = 0.7;
  for (let r = 20; r < 78; r += 9 - r / 13) {
    c.beginPath(); c.ellipse(1580, 757, r, r * 0.6, 0.12, 0, 7); c.stroke();
  }
  for (let r = 10; r < 46; r += 6 - r / 12) {
    c.beginPath(); c.ellipse(1583, 697, r * 0.95, r, 0.1, 0, 7); c.stroke();
  }
  for (let a = 0; a < 6.28; a += 0.16) {
    c.beginPath(); c.moveTo(1580, 757);
    c.quadraticCurveTo(1580 + 45 * Math.cos(a - 0.25), 757 + 30 * Math.sin(a - 0.25), 1580 + 90 * Math.cos(a), 757 + 70 * Math.sin(a));
    c.stroke();
  }
  c.restore();
  c.strokeStyle = '#cf800f';
  c.lineWidth = 1.2;
  c.stroke(s);
  c.strokeStyle = 'rgba(190,70,80,.8)';
  c.beginPath(); c.moveTo(1612, 724); c.lineTo(1626, 737); c.stroke();
}

function drawUV() {
  const c = document.getElementById('uvmesh').getContext('2d');
  c.translate(370 - 2, 560 - 97);
  c.scale(1 / 3, 1 / 3);
  c.fillStyle = '#505050';
  c.fillRect(102, 68, 767, 767);
  c.strokeStyle = '#4b4b4b'; c.lineWidth = 3;
  for (let i = 1; i < 8; i++) {
    c.beginPath(); c.moveTo(102 + i * 96, 68); c.lineTo(102 + i * 96, 835);
    c.moveTo(102, 68 + i * 96); c.lineTo(869, 68 + i * 96); c.stroke();
  }

  const left = [[115,115],[106,136],[121,147],[119,176],[118,205],[115,232],[108,263],[102,293],[131,300],[125,327],[120,353],[113,381],[103,424],[126,434],[128,471],[106,480],[108,530],[111,568],[121,602],[116,639],[103,679],[107,713],[130,718],[142,735],[110,774],[158,780],[156,822]];
  const bottom = [[327,802],[472,796],[547,811],[662,807],[817,805],[924,822],[927,780]];
  const right = [[879,774],[910,734],[898,719],[875,712],[873,679],[884,639],[889,601],[880,568],[894,536],[876,529],[874,480],[872,424],[882,381],[888,353],[895,327],[898,300],[880,281],[884,263],[883,232],[887,205],[887,176],[889,147],[874,136],[884,115],[904,95]];
  const top = [[820,86],[611,90],[457,91],[260,85],[203,98],[136,95]];
  const poly = left.concat(bottom, right, top);
  const path = new Path2D();
  poly.forEach((p, i) => i ? path.lineTo(p[0], p[1]) : path.moveTo(p[0], p[1]));
  path.closePath();
  c.fillStyle = '#8b5f4a';
  c.fill(path);

  const pts = poly.slice();
  [[172,119],[247,107],[302,109],[392,112],[495,110],[568,116],[689,112],[743,103],[829,100],[772,115],[815,129],[144,132],[239,125],[278,122],[325,124],[448,129],[481,106],[503,125],[541,128],[630,128],[363,138],[306,142],[560,143],[512,140],[517,150],[675,131],[719,122],[767,138],
   [161,747],[207,775],[259,751],[328,765],[410,744],[437,770],[379,769],[387,779],[494,743],[514,772],[548,770],[602,779],[646,769],[719,774],[707,791],[790,783],[833,756],[778,766],[725,748],[677,766],[655,737],[269,766],[293,751],[371,748],[452,730],[530,746],[850,720],[817,740],[184,733],[223,720],[212,757],[768,741],[600,748],
   [460,356],[485,358],[503,362],[529,365],[430,368],[460,409],[481,404],[506,410],[535,414],[463,455],[481,445],[510,459],[433,432],[445,492],[469,497],[500,488],[498,535],[472,560],[490,577],[487,612],[508,594],[450,660],[486,662],[426,640],[456,704],[486,703],[415,438],[832,440],[848,451],[834,478],[851,488],[862,550],[815,552],[838,537],[857,597],[812,466],[845,393]
  ].forEach(p => pts.push(p));

  function arc(x0, y0, cx, cy, x1, y1, step) {
    const n = Math.round(Math.hypot(x1 - x0, y1 - y0) / step);
    for (let i = 0; i <= n; i++) {
      const t = i / n, u = 1 - t;
      pts.push([u * u * x0 + 2 * u * t * cx + t * t * x1 + rnd() * 2, u * u * y0 + 2 * u * t * cy + t * t * y1 + rnd() * 2]);
    }
  }
  arc(128, 471, 185, 435, 245, 470, 9); arc(140, 515, 205, 460, 285, 525, 8); arc(150, 408, 190, 395, 240, 425, 11);
  arc(135, 540, 210, 565, 300, 525, 8); arc(140, 572, 200, 592, 260, 570, 9); arc(165, 610, 220, 595, 285, 612, 9);
  arc(155, 520, 205, 520, 270, 505, 9); arc(310, 470, 360, 540, 402, 575, 8); arc(315, 500, 345, 560, 390, 600, 8);
  arc(378, 497, 420, 470, 465, 455, 9); arc(400, 580, 425, 560, 450, 580, 10); arc(390, 515, 410, 500, 430, 490, 10);
  arc(640, 500, 700, 470, 810, 465, 9); arc(640, 575, 700, 500, 800, 498, 8);
  arc(680, 600, 730, 520, 790, 525, 9); arc(520, 515, 545, 545, 575, 580, 10); arc(650, 470, 700, 440, 790, 420, 10);
  arc(560, 390, 590, 378, 630, 385, 10); arc(690, 640, 740, 580, 790, 580, 9);

  function rad(x, y) {
    const e = (a, b, w, h) => Math.hypot((x - a) / w, (y - b) / h);
    if (y > 735) return 60;
    if (x > 425 && x < 525 && y > 368 && y < 720) return 33;
    if (x > 822 && y > 350) return 34;
    if (y < 150) return 30;
    const d = Math.min(e(305, 420, 60, 75), e(210, 540, 85, 65), e(315, 530, 45, 70), e(700, 620, 70, 45), e(645, 490, 45, 45), e(750, 560, 45, 50));
    if (d < 1) return 10.5;
    if (d < 1.5) return 13;
    if (y > 670) return 20;
    return 13 + rnd() * 8;
  }
  for (let k = 0; k < 26000; k++) {
    const x = 104 + rnd() * 790, y = 100 + rnd() * 660;
    if (!c.isPointInPath(path, 368 + x / 3, 463 + y / 3)) continue;
    const r = rad(x, y);
    let ok = true;
    for (let i = 0; i < pts.length && ok; i++) {
      const dx = pts[i][0] - x, dy = pts[i][1] - y;
      if (dx * dx + dy * dy < r * r) ok = false;
    }
    if (ok) pts.push([x, y]);
  }

  // Gabriel graph over the points gives the cell edges
  const edges = new Path2D();
  for (let i = 0; i < pts.length; i++) {
    const near = [];
    for (let j = 0; j < pts.length; j++) {
      if (j === i) continue;
      const dx = pts[j][0] - pts[i][0], dy = pts[j][1] - pts[i][1], d = dx * dx + dy * dy;
      if (d < 12000) near.push([d, j]);
    }
    near.sort((a, b) => a[0] - b[0]);
    near.length = Math.min(near.length, 14);
    for (const [d, j] of near) {
      if (j < i) continue;
      const mx = (pts[i][0] + pts[j][0]) / 2, my = (pts[i][1] + pts[j][1]) / 2;
      if (!c.isPointInPath(path, 368 + mx / 3, 463 + my / 3)) continue;
      let ok = true;
      for (const [, k] of near) {
        if (k === j) continue;
        const ex = pts[k][0] - mx, ey = pts[k][1] - my;
        if (ex * ex + ey * ey < d / 4) { ok = false; break; }
      }
      if (ok) { edges.moveTo(pts[i][0], pts[i][1]); edges.lineTo(pts[j][0], pts[j][1]); }
    }
  }
  edges.addPath(path);
  // long seams at the top and bottom of the islands
  const seam = (...p) => { edges.moveTo(p[0], p[1]); for (let i = 2; i < p.length; i += 2) edges.lineTo(p[i], p[i + 1]); };
  seam(260, 85, 611, 90, 820, 86, 1028, 85, 972, 98, 820, 86);
  seam(904, 95, 972, 98);
  seam(203, 98, 457, 93); seam(568, 116, 611, 90, 689, 112); seam(392, 112, 457, 91, 495, 110);
  seam(156, 822, 327, 802, 547, 811, 924, 822); seam(158, 780, 327, 802, 437, 770); seam(662, 807, 790, 783, 879, 774); seam(327, 802, 328, 765);
  seam(547, 811, 548, 770, 662, 807, 924, 817); seam(207, 775, 327, 802, 472, 796); seam(142, 735, 259, 751); seam(833, 756, 879, 774, 817, 805);
  c.lineJoin = 'round';
  c.strokeStyle = '#1c130c'; c.lineWidth = 6.5; c.stroke(edges);
  c.strokeStyle = '#ee8208'; c.lineWidth = 2.8; c.stroke(edges);
  c.fillStyle = '#909090';
  c.beginPath(); c.moveTo(509, 370); c.lineTo(523, 373); c.lineTo(527, 408); c.lineTo(514, 408); c.fill();
  c.strokeStyle = 'rgba(150,150,150,.75)'; c.lineWidth = 3;
  c.strokeRect(101.5, 67.5, 767, 768);
  c.fillStyle = '#ff8500';
  pts.push([1028, 85], [972, 98]);
  for (const p of pts) { c.beginPath(); c.arc(p[0], p[1], 7.5, 0, 7); c.fill(); }

  // 2D cursor
  c.translate(103, 835);
  c.strokeStyle = '#000'; c.lineWidth = 3;
  c.beginPath();
  for (const [x, y] of [[1, 0], [-1, 0], [0, 1], [0, -1]]) { c.moveTo(20 * x, 20 * y); c.lineTo(75 * x, 75 * y); }
  c.stroke();
  c.lineWidth = 4;
  c.strokeStyle = '#fff';
  c.beginPath(); c.arc(0, 0, 37, 0, 7); c.stroke();
  c.strokeStyle = '#f01818'; c.setLineDash([14.5, 14.5]);
  c.beginPath(); c.arc(0, 0, 37, 0, 6.283); c.stroke();
}

drawView();
drawUV();
```
